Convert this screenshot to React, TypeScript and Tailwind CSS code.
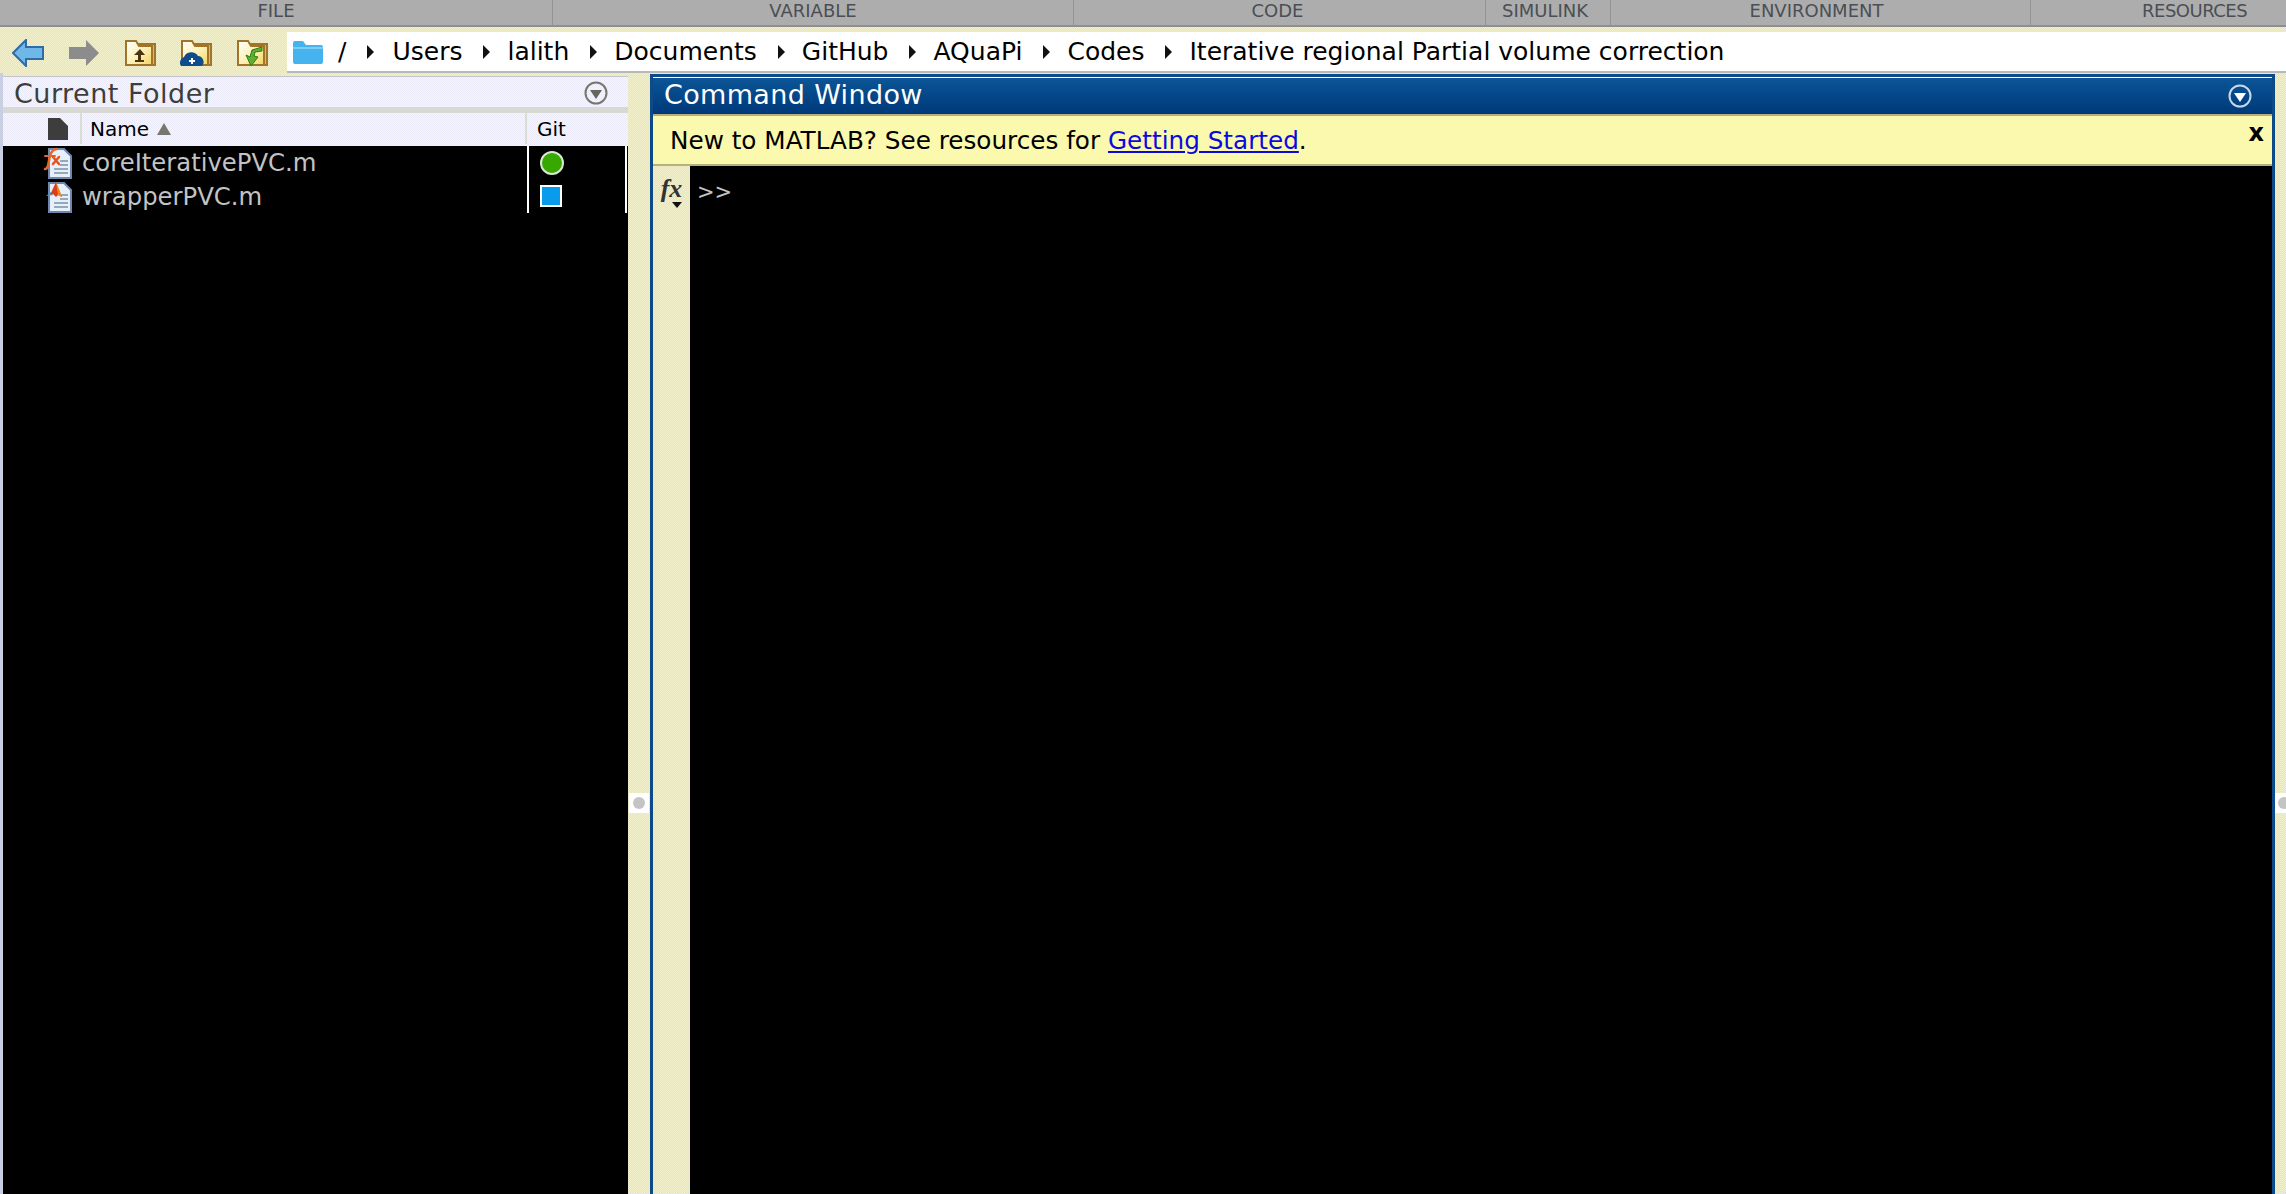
import React from "react";

const sections = [
  { label: "FILE", className: "w-[553px] justify-center" },
  { label: "VARIABLE", className: "w-[521px] justify-center" },
  { label: "CODE", className: "w-[412px] justify-center pr-[4px]" },
  { label: "SIMULINK", className: "w-[125px] justify-center pr-[6px]" },
  { label: "ENVIRONMENT", className: "w-[420px] justify-center pr-[8px]" },
  { label: "RESOURCES", className: "flex-1 justify-start pl-[111px] tracking-[-0.5px]" },
];

const crumbs = ["Users", "lalith", "Documents", "GitHub", "AQuaPi", "Codes"];

const dither =
  "bg-[repeating-conic-gradient(#f3f1cc_0_25%,#dddef5_0_50%)] bg-[length:2px_2px]";
const ditherLight =
  "bg-[repeating-conic-gradient(#fbf9d8_0_25%,#eaeaf8_0_50%)] bg-[length:2px_2px]";

function Folder({ id, children }: { id: string; children?: React.ReactNode }) {
  return (
    <svg viewBox="0 0 32 28" className="w-8 h-7">
      <defs>
        <linearGradient id={id} x1="0" y1="0" x2="1" y2="1">
          <stop offset="0" stopColor="#ffffff" />
          <stop offset="0.55" stopColor="#fdf0b4" />
          <stop offset="1" stopColor="#f6d35e" />
        </linearGradient>
      </defs>
      <path d="M13 5h18v21H13z" fill="#d9b877" stroke="#a2742a" strokeWidth="2" />
      <path d="M2 2h10l3 5h13v19H2z" fill={`url(#${id})`} stroke="#a2742a" strokeWidth="2" />
      {children}
    </svg>
  );
}

function MFile({ kind }: { kind: "fx" | "m" }) {
  return (
    <svg viewBox="0 0 32 34" className="w-8 h-[34px]">
      <path d="M7 3h15l7 7v22H7z" fill="#e6f0fa" stroke="#6f86ad" strokeWidth="2" />
      <path d="M18 15h8M18 19h8M12 23h14M12 27h14" stroke="#7d8fa8" strokeWidth="1.5" />
      {kind === "fx" ? (
        <g fill="none" strokeLinecap="round">
          <path d="M3 23c4 0 3-7 5-13 1-4 3-7 7-7" stroke="#e2682b" strokeWidth="2.5" />
          <path d="M3 10h10" stroke="#e2682b" strokeWidth="2" />
          <path d="M11 11l6 7M17 11l-6 7" stroke="#e8501c" strokeWidth="2.5" />
        </g>
      ) : (
        <g>
          <path d="M4 16l5-4 2 3z" fill="#3fa7c9" />
          <path d="M8 15l6-13 6 15-4-2-2 2-3-3z" fill="#d8401c" />
          <path d="M14 2l6 15-4-2z" fill="#f08a1e" />
        </g>
      )}
    </svg>
  );
}

function Dropdown({ light }: { light?: boolean }) {
  return (
    <svg viewBox="0 0 26 26" className="w-[26px] h-[26px]">
      <circle cx="13" cy="13" r="10.5" fill="none" stroke={light ? "#c7d7ea" : "#77776f"} strokeWidth="2" />
      <path d="M7 10h12l-6 9z" fill={light ? "#ffffff" : "#66665f"} />
    </svg>
  );
}

function Crumb({ children }: { children: React.ReactNode }) {
  return (
    <>
      <span>{children}</span>
      <svg viewBox="0 0 8 14" className="w-2 h-3.5 ml-[20px] mr-[17px] shrink-0">
        <path d="M1 0l7 7-7 7z" fill="#111" />
      </svg>
    </>
  );
}

export default function App() {
  return (
    <div className="h-screen w-full flex flex-col overflow-hidden font-['DejaVu_Sans',sans-serif]">
      {/* Toolstrip tabs */}
      <div className="h-[27px] flex bg-[#adadad] border-b-2 border-[#8f8f8f] shrink-0">
        {sections.map((s) => (
          <div
            key={s.label}
            className={`flex items-start text-[18px] leading-[21px] text-[#4a4f55] border-r border-[#949494] last:border-r-0 ${s.className}`}
          >
            {s.label}
          </div>
        ))}
      </div>

      {/* Address bar */}
      <div className={`h-[46px] flex shrink-0 ${dither}`}>
        <div className="w-[287px] flex items-center shrink-0 pl-3 pt-[6px] gap-6">
          <svg viewBox="0 0 32 28" className="w-8 h-7">
            <path d="M14 1L1 14l13 13v-7h17V8H14z" fill="#6fb7e6" stroke="#2d6ca8" strokeWidth="2" />
          </svg>
          <svg viewBox="0 0 32 28" className="w-8 h-7">
            <path d="M18 1l13 13-13 13v-7H1V8h17z" fill="#8c8c8c" />
          </svg>
          <Folder id="folder-up">
            <path d="M16 10l-6 6h4v5h-3v2h9v-2h-3v-5h4z" fill="#4b3510" />
          </Folder>
          <Folder id="folder-cloud">
            <path d="M1 27a6 6 0 0 1 3-9 8 8 0 0 1 14-1 6 6 0 0 1 4 10z" fill="#0f4c8a" />
            <path d="M9 22h6M12 19v6" stroke="#fff" strokeWidth="2" />
          </Folder>
          <Folder id="folder-sync">
            <path d="M26 8l-10 3-2 7-4-2 5 11 7-9-4-1 1-4 7-1z" fill="#5fb02f" stroke="#2c7a14" strokeWidth="1" />
          </Folder>
        </div>
        <div className="flex-1 h-[41px] mt-[5px] bg-white border-b-2 border-[#b8b8b8] flex items-center pl-[5px] text-[25px] text-black whitespace-nowrap">
          <svg viewBox="0 0 32 26" className="w-8 h-[26px] shrink-0">
            <path d="M1 4a2 2 0 0 1 2-2h8l3 4h15a2 2 0 0 1 2 2v15a2 2 0 0 1-2 2H3a2 2 0 0 1-2-2z" fill="#45b4ee" />
            <path d="M1 9h30" stroke="#8fd6f8" strokeWidth="1.5" />
          </svg>
          <span className="ml-[14px] mr-[20px] pt-px">/</span>
          <svg viewBox="0 0 8 14" className="w-2 h-3.5 mr-[18px] shrink-0">
            <path d="M1 0l7 7-7 7z" fill="#111" />
          </svg>
          {crumbs.map((c) => (
            <Crumb key={c}>{c}</Crumb>
          ))}
          <span>Iterative regional Partial volume correction</span>
        </div>
      </div>

      {/* Panels */}
      <div className={`flex-1 flex min-h-0 ${dither}`}>
        <div className="w-[3px] shrink-0 bg-[#c9cfe2]" />
        {/* Current Folder */}
        <section className="w-[625px] mt-[3px] flex flex-col shrink-0 border-t border-[#c4c4cc]">
          <div className={`h-[36px] flex items-center justify-between pl-[11px] pr-[19px] pt-[2px] border-b-[6px] border-[#d8d8d4] text-[27px] text-[#3e3e3a] ${ditherLight}`}>
            <span className="leading-none tracking-[0.5px]">Current Folder</span>
            <Dropdown />
          </div>
          <div className={`h-[33px] flex items-center pb-[2px] text-[20px] text-black ${ditherLight}`}>
            <div className="w-[524px] h-full flex items-center border-r-2 border-[#dcdcd6]">
              <div className="w-[45px]" />
              <svg viewBox="0 0 20 22" className="w-5 h-[22px]">
                <path d="M0 0h12l8 8v14H0z" fill="#3d3d3d" />
              </svg>
              <div className="w-[14px] h-full border-r-2 border-[#dcdcd6] mr-2" />
              <span className="leading-none">Name</span>
              <svg viewBox="0 0 14 12" className="w-3.5 h-3 ml-2">
                <path d="M7 0l7 12H0z" fill="#77776f" />
              </svg>
            </div>
            <span className="ml-[10px] leading-none">Git</span>
          </div>
          <div className="flex-1 bg-black text-[#c3c3c3] text-[24.3px]">
            <div className="h-[34px] flex items-center">
              <div className="w-[39px] shrink-0" />
              <MFile kind="fx" />
              <span className="w-[445px] ml-[8px] leading-none">coreIterativePVC.m</span>
              <div className="w-[2px] h-full bg-white" />
              <div className="w-[96px] flex pl-[11px]">
                <div className="w-6 h-6 rounded-full bg-[#38a800] border-2 border-[#d6e8cf] -mt-px" />
              </div>
              <div className="w-[2px] h-full bg-white" />
            </div>
            <div className="h-[33px] flex items-center">
              <div className="w-[39px] shrink-0" />
              <MFile kind="m" />
              <span className="w-[445px] ml-[8px] pt-[2px] leading-none">wrapperPVC.m</span>
              <div className="w-[2px] h-full bg-white" />
              <div className="w-[96px] flex pl-[11px]">
                <div className="w-[22px] h-[22px] bg-[#0a9cec] border-2 border-white -mt-px" />
              </div>
              <div className="w-[2px] h-full bg-white" />
            </div>
          </div>
        </section>

        {/* Gutter */}
        <div className="w-[22px] shrink-0 flex items-start justify-center pt-[720px]">
          <div className="w-5 h-5 bg-white flex items-center justify-center">
            <div className="w-3 h-3 rounded-full bg-[#c4c4c4]" />
          </div>
        </div>

        {/* Command Window */}
        <section className="flex-1 flex flex-col min-w-0 mt-px border-x-[3px] border-t-[3px] border-[#0c4a8a]">
          <div className="h-[37px] border-t border-white flex items-center justify-between pl-[11px] pr-[19px] bg-gradient-to-b from-[#0c5596] to-[#00397a] text-white text-[27px] shrink-0">
            <span className="leading-none tracking-[0.35px] pb-[3px]">Command Window</span>
            <Dropdown light />
          </div>
          <div className="h-[52px] bg-[#fbf9ad] border-t-2 border-b-2 border-[#b5b07c] flex items-center justify-between pl-[17px] pr-[8px] pt-[2px] text-[24.7px] text-black shrink-0">
            <span className="leading-none">
              New to MATLAB? See resources for{" "}
              <a href="#getting-started" className="text-[#0a0ae0] underline">
                Getting Started
              </a>
              .
            </span>
            <span className="text-[24px] font-bold leading-none self-start mt-[3px]">x</span>
          </div>
          <div className="flex-1 flex min-h-0">
            <div className={`w-[37px] shrink-0 flex flex-col items-center pt-[10px] ${dither}`}>
              <span className="font-['Liberation_Serif',serif] italic font-bold text-[26px] leading-none text-[#333]">fx</span>
              <svg viewBox="0 0 10 6" className="w-2.5 h-1.5 ml-[10px]">
                <path d="M0 0h10L5 6z" fill="#111" />
              </svg>
            </div>
            <div className="flex-1 bg-black text-[#c3c3c3] text-[21px] pl-[7px] pt-[16px] leading-none">&gt;&gt;</div>
          </div>
        </section>

        {/* Right gutter */}
        <div className="w-[11px] shrink-0 flex items-start overflow-hidden pt-[720px]">
          <div className="w-5 h-5 shrink-0 bg-white flex items-center justify-center ml-[-1px]">
            <div className="w-3 h-3 rounded-full bg-[#c4c4c4]" />
          </div>
        </div>
      </div>
    </div>
  );
}
